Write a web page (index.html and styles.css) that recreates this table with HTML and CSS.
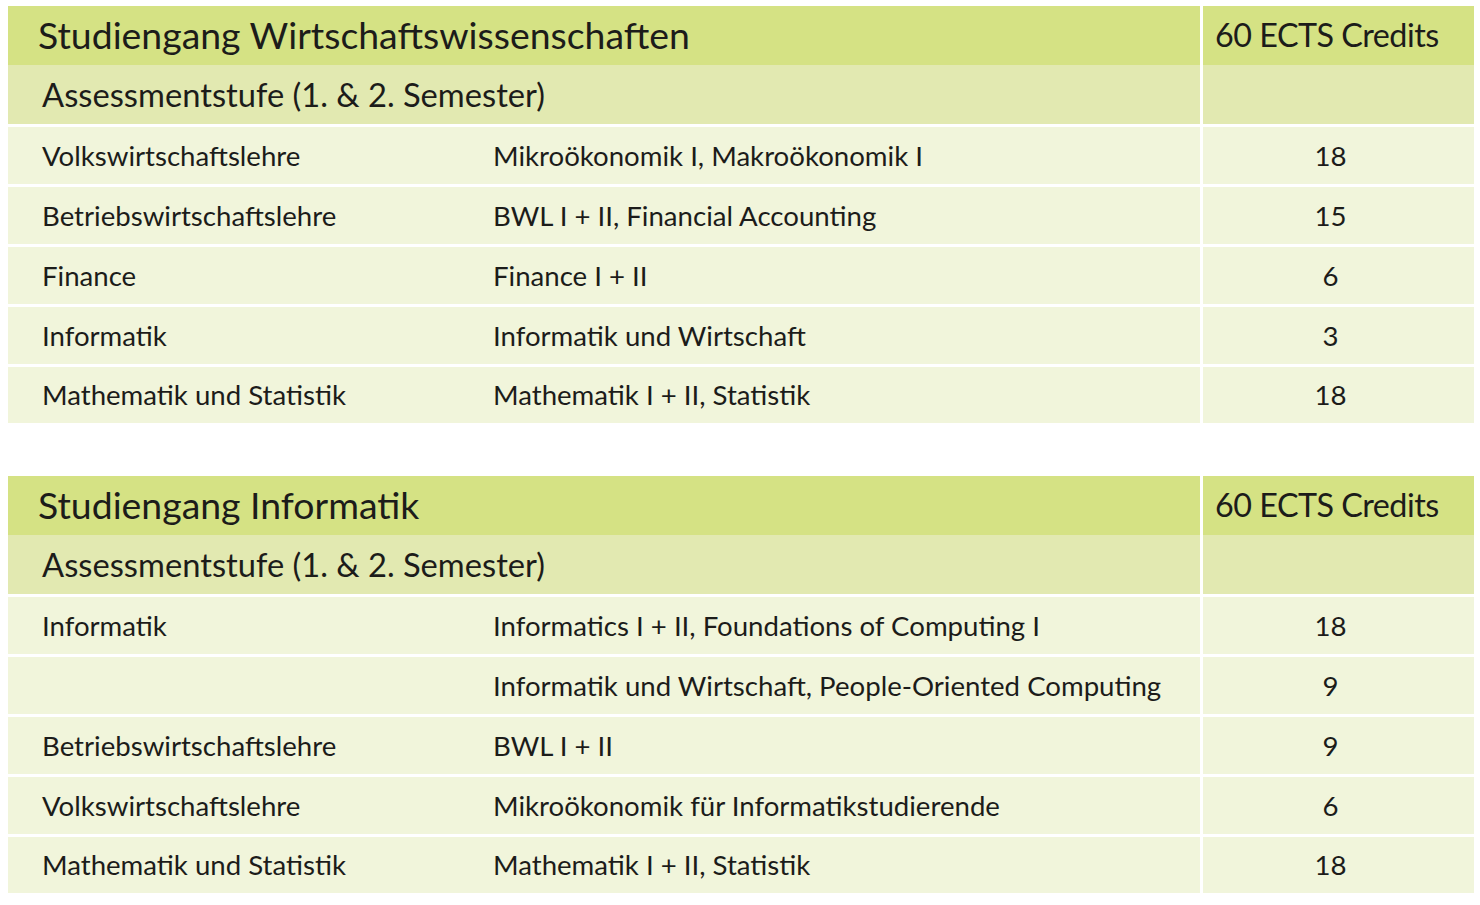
FILE: index.html
```html
<!DOCTYPE html>
<html lang="de">
<head>
<meta charset="utf-8">
<title>Studiengänge</title>
<link rel="stylesheet" href="styles.css">
</head>
<body>
<table class="plan">
  <colgroup><col class="c1"><col class="c2"><col class="c3"></colgroup>
  <tr class="head">
    <th colspan="2" class="title">Studiengang Wirtschaftswissenschaften</th>
    <th class="num-head">60 ECTS Credits</th>
  </tr>
  <tr class="stage">
    <td colspan="2" class="stage-title">Assessmentstufe (1. &amp; 2. Semester)</td>
    <td class="num"></td>
  </tr>
  <tr class="row"><td class="area">Volkswirtschaftslehre</td><td class="course">Mikroökonomik I, Makroökonomik I</td><td class="num">18</td></tr>
  <tr class="row"><td class="area">Betriebswirtschaftslehre</td><td class="course">BWL I + II, Financial Accounting</td><td class="num">15</td></tr>
  <tr class="row"><td class="area">Finance</td><td class="course">Finance I + II</td><td class="num">6</td></tr>
  <tr class="row"><td class="area">Informatik</td><td class="course">Informatik und Wirtschaft</td><td class="num">3</td></tr>
  <tr class="row last"><td class="area">Mathematik und Statistik</td><td class="course">Mathematik I + II, Statistik</td><td class="num">18</td></tr>
</table>

<table class="plan second">
  <colgroup><col class="c1"><col class="c2"><col class="c3"></colgroup>
  <tr class="head">
    <th colspan="2" class="title">Studiengang Informatik</th>
    <th class="num-head">60 ECTS Credits</th>
  </tr>
  <tr class="stage">
    <td colspan="2" class="stage-title">Assessmentstufe (1. &amp; 2. Semester)</td>
    <td class="num"></td>
  </tr>
  <tr class="row"><td class="area">Informatik</td><td class="course">Informatics I + II, Foundations of Computing I</td><td class="num">18</td></tr>
  <tr class="row"><td class="area"></td><td class="course">Informatik und Wirtschaft, People-Oriented Computing</td><td class="num">9</td></tr>
  <tr class="row"><td class="area">Betriebswirtschaftslehre</td><td class="course">BWL I + II</td><td class="num">9</td></tr>
  <tr class="row"><td class="area">Volkswirtschaftslehre</td><td class="course">Mikroökonomik für Informatikstudierende</td><td class="num">6</td></tr>
  <tr class="row last"><td class="area">Mathematik und Statistik</td><td class="course">Mathematik I + II, Statistik</td><td class="num">18</td></tr>
</table>
</body>
</html>
```
FILE: styles.css
```css
html, body {
  margin: 0;
  padding: 0;
  background: #ffffff;
}
body {
  padding: 6px 0 0 8px;
  font-family: "Lato", "Liberation Sans", sans-serif;
  color: #1c1c1a;
}
.plan {
  width: 1466px;
  border-collapse: separate;
  border-spacing: 0;
  table-layout: fixed;
}
.plan.second {
  margin-top: 53px;
}
.c1 { width: 451px; }
.c2 { width: 741px; }
.c3 { width: 274px; }

.plan th, .plan td {
  padding: 0;
  text-align: left;
  font-weight: 400;
  white-space: nowrap;
  vertical-align: middle;
  overflow: hidden;
}

.head th {
  background: #d5e284;
  font-size: 37.4px;
  line-height: 57px;
  padding-bottom: 2px;
}
.head .title { padding-left: 30px; }
.head .num-head {
  border-left: 3px solid #ffffff;
  padding-left: 12px;
  font-size: 32.3px;
  letter-spacing: -0.5px;
}

.stage td {
  background: #e2e9b1;
  font-size: 32.7px;
  line-height: 59px;
}
.stage .stage-title { padding-left: 34px; }

.row td {
  background: #f1f5db;
  font-size: 27.6px;
  line-height: 57px;
  border-top: 3px solid #ffffff;
}
.row.last td { line-height: 56px; }
.row .area { padding-left: 34px; }
.row .course { padding-left: 34px; }

.plan .num {
  border-left: 3px solid #ffffff;
  text-align: center;
  padding-right: 16px;
}
```
